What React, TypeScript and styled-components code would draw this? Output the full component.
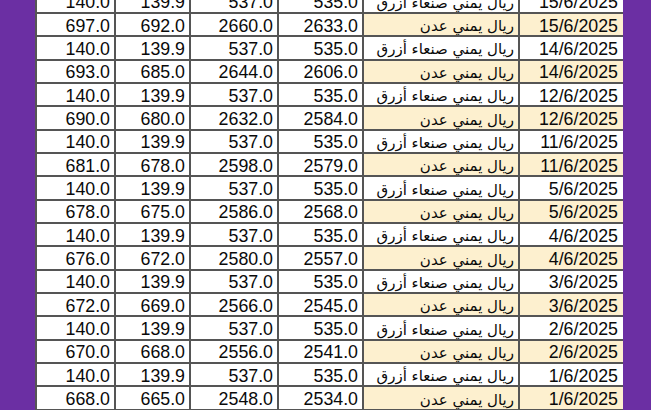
import React from "react";
import styled, { createGlobalStyle } from "styled-components";

const Global = createGlobalStyle`
  html, body { margin: 0; padding: 0; background: #6b2fa3; }
  #root { width: 651px; height: 410px; }
`;

const Page = styled.div`
  width: 651px;
  height: 410px;
  overflow: hidden;
  background: #6b2fa3;
  display: flex;
  padding-left: 35px;
  box-sizing: border-box;
`;

const Table = styled.div`
  width: 586px;
  margin-top: -9.4px;
  display: grid;
  grid-template-columns: 79px 75px 88px 85px 156px 103px;
  grid-auto-rows: 23.35px;
  background: #ffffff;
  border-left: 2px solid #555555;
  border-right: 2px solid #555555;
  box-sizing: border-box;
  align-self: flex-start;
`;

const Cell = styled.div<{ $hl?: boolean; $arabic?: boolean }>`
  box-sizing: border-box;
  border-right: 2px solid #555555;
  border-bottom: 2px solid #555555;
  background: ${(p) => (p.$hl ? "#fdf0cf" : "#ffffff")};
  display: flex;
  align-items: center;
  padding: 3px 4px 0 0;
  font-family: ${(p) =>
    p.$arabic ? '"DejaVu Sans", sans-serif' : '"Liberation Sans", Arial, sans-serif'};
  font-size: ${(p) => (p.$arabic ? "15px" : "17.8px")};
  color: #0a0a0a;
  white-space: nowrap;
  overflow: hidden;
  direction: ${(p) => (p.$arabic ? "rtl" : "ltr")};
  justify-content: ${(p) => (p.$arabic ? "flex-start" : "flex-end")};
`;

const Row = styled.div`
  display: contents;
  & > div:last-child { border-right: none; padding-right: 5px; }
`;

type R = { d: string; aden: boolean; v: [string, string, string, string] };

const sanaa: [string, string, string, string] = ["140.0", "139.9", "537.0", "535.0"];

const adenData: [string, [string, string, string, string]][] = [
  ["15/6/2025", ["697.0", "692.0", "2660.0", "2633.0"]],
  ["14/6/2025", ["693.0", "685.0", "2644.0", "2606.0"]],
  ["12/6/2025", ["690.0", "680.0", "2632.0", "2584.0"]],
  ["11/6/2025", ["681.0", "678.0", "2598.0", "2579.0"]],
  ["5/6/2025", ["678.0", "675.0", "2586.0", "2568.0"]],
  ["4/6/2025", ["676.0", "672.0", "2580.0", "2557.0"]],
  ["3/6/2025", ["672.0", "669.0", "2566.0", "2545.0"]],
  ["2/6/2025", ["670.0", "668.0", "2556.0", "2541.0"]],
  ["1/6/2025", ["668.0", "665.0", "2548.0", "2534.0"]],
];

const rows: R[] = adenData.flatMap(([d, v]) => [
  { d, aden: false, v: sanaa },
  { d, aden: true, v },
]);

export default function App() {
  return (
    <>
      <Global />
      <Page>
        <Table>
          {rows.map((r, i) => (
            <Row key={i}>
              {r.v.map((x, j) => (
                <Cell key={j}>{x}</Cell>
              ))}
              <Cell $arabic $hl={r.aden}>
                {r.aden ? "ريال يمني عدن" : "ريال يمني صنعاء أزرق"}
              </Cell>
              <Cell $hl={r.aden}>{r.d}</Cell>
            </Row>
          ))}
        </Table>
      </Page>
    </>
  );
}
